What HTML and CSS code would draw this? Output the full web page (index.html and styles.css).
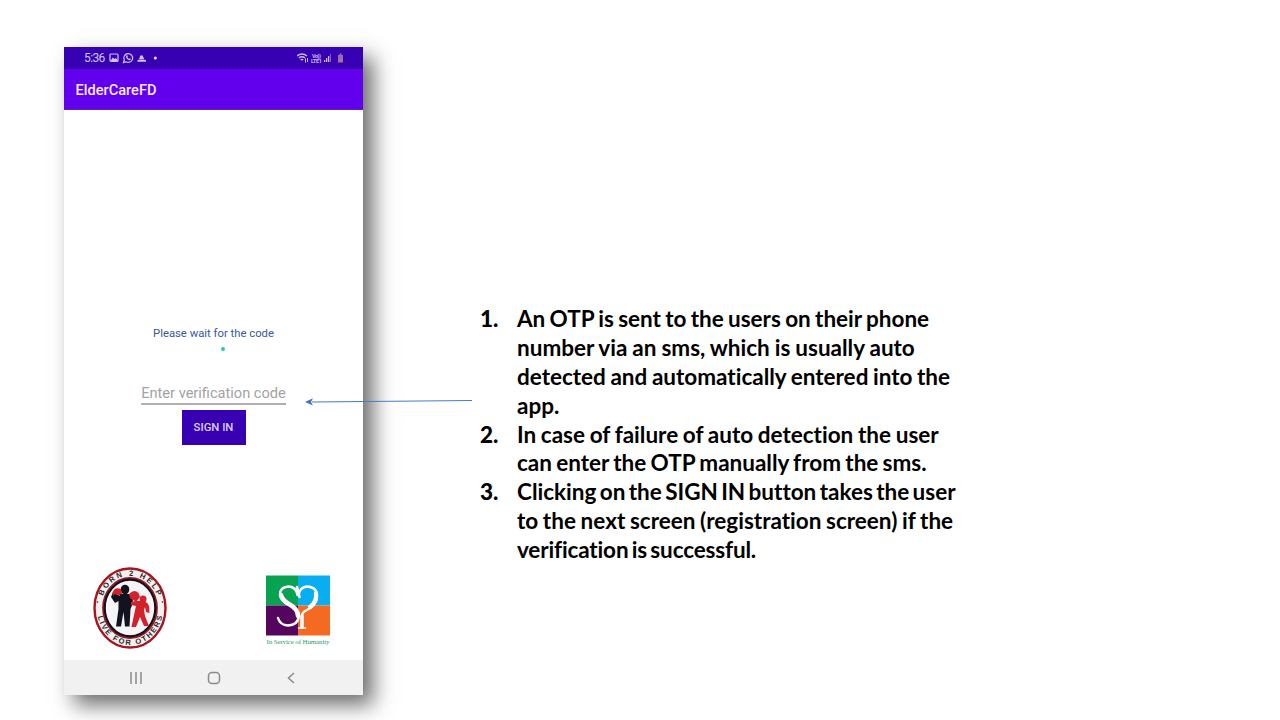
FILE: index.html
```html
<!DOCTYPE html>
<html lang="en">
<head>
<meta charset="utf-8">
<title>ElderCareFD</title>
<link rel="stylesheet" href="styles.css">
</head>
<body>
<main class="slide">
  <section class="phone">
    <div class="status">
      <span class="time">5:36</span>
      <svg class="status-left" width="52" height="12" viewBox="0 0 52 12">
        <rect x="1" y="2" width="8" height="7.4" rx="1" fill="none" stroke="#d2c3f2" stroke-width="1.2"/>
        <path d="M1.500 9L3.800 5.500L5.500 7L7 6L9 9Z" fill="#d2c3f2"/>
        <path d="M14.500 10.500L15.300 8A4.400 4.400 0 1 1 17 9.800Z" fill="none" stroke="#d2c3f2" stroke-width="1.200"/>
        <path d="M17.300 3.600q1.200-.8 1.500 1l-.4.7q.6 1.200 1.700 1.600l.7-.6q1.500.3.9 1.300q-1.800 1.500-3.900-.8q-1.400-1.900-.5-3.200" fill="#d2c3f2"/>
        <path d="M28.500 9.800h8.500v-1.700h-8.500zM29.500 7.500l1-1.500.8-2.500h2.500l.8 2.500 1 1.500z" fill="#d2c3f2"/>
        <circle cx="46.300" cy="6" r="1.500" fill="#eee7ff"/>
      </svg>
      <svg class="status-right" width="50" height="12" viewBox="0 0 50 12">
        <g fill="none" stroke="#cbb9ef" stroke-width="1.400">
          <path d="M0 4Q5 0 10 4M1.800 6Q5 3.600 8 6M3.600 8Q5 7 6.200 8"/>
          <path d="M8.500 6.500v4M10.500 6v4" stroke-width="1"/>
        </g>
        <text x="15" y="5.500" class="net" textLength="9">Vo))</text>
        <text x="14" y="10.800" class="net" textLength="11">LTE1</text>
        <path d="M27 10V8h1.300v2zM29 10V6h1.300v4zM31 10V4h1.300v6z" fill="#cbb9ef"/>
        <path d="M33 10V2h1v8z" fill="#7e5bcb"/>
        <path d="M41 3h1.500V1.500h2V3H46v4h-5z" fill="#8c6cbc"/>
        <path d="M41 7h5v3.500h-5z" fill="#b56b8f"/>
      </svg>
    </div>
    <header class="appbar">ElderCareFD</header>
    <div class="content">
      <p class="wait">Please wait for the code</p>
      <i class="dot"></i>
      <div class="field">Enter verification code</div>
      <div class="button">SIGN IN</div>
      <div class="logos">
        <svg class="logo-help" width="74" height="82" viewBox="0 0 74 82">
          <defs>
            <path id="arcTop" d="M7.800 41A29.200 32.300 0 0 1 66.200 41"/>
            <path id="arcBottom" d="M3.800 41A33.200 37 0 0 0 70.200 41"/>
          </defs>
          <ellipse cx="37" cy="41" rx="35.500" ry="39.500" fill="#f3f0f0" stroke="#a51620" stroke-width="2.400"/>
          <ellipse cx="37" cy="41" rx="27" ry="30" fill="#f5f5f7" stroke="#981923" stroke-width="1.800"/>
          <ellipse cx="37" cy="41" rx="25.300" ry="28.300" fill="none" stroke="#170d17" stroke-width="2.200"/>
          <text class="seal"><textPath href="#arcTop" startOffset="50%" text-anchor="middle" textLength="72">BORN 2 HELP</textPath></text>
          <text class="seal"><textPath href="#arcBottom" startOffset="50%" text-anchor="middle" textLength="93">LIVE FOR OTHERS</textPath></text>
          <circle cx="4.500" cy="35" r=".8" fill="#222"/>
          <circle cx="69.500" cy="35" r=".8" fill="#222"/>
          <g fill="#13131f">
            <ellipse cx="32" cy="22.500" rx="4.300" ry="4.800"/>
            <path d="M26 27L36 27Q40 30 40 36L37.500 42L36.500 59.500H32L30.500 45L28 59.500H23L25.500 42V34L22 36L18 30L20 25L27 29Z"/>
          </g>
          <path d="M19.500 26Q21 19.500 28 22L29 27L25 28L22 27L20 29Z" fill="#d4222c"/>
          <g fill="#d4222c">
            <path d="M36 27Q41 21.500 45.500 26L47 30L43 35L37 31Z"/>
            <circle cx="50" cy="32" r="3.500"/>
            <path d="M43 34L49 34Q54 34 56 39L56.500 46L53 45L52 40L51 43L52 49L56 59H51L47 50L43 60H38.500L41 48L43 39L38 38L38 35Z"/>
          </g>
        </svg>
        <svg class="logo-sp" width="68" height="76" viewBox="0 0 68 76">
          <path d="M2 2.500h32v30H2z" fill="#08a351"/>
          <path d="M34 2.500H66v30H34z" fill="#08aeef"/>
          <path d="M2 32.500h32v30H2z" fill="#56055f"/>
          <path d="M34 32.500H66v30H34z" fill="#f46a22"/>
          <g fill="none" stroke="#fff" stroke-linecap="round" stroke-linejoin="round">
            <path d="M33.500 22Q32 13.500 24 13.500Q15.500 14.500 16 22Q17 28 25 32Q35 37 35 43Q34 52 24 52.500Q16 52 14 45" stroke-width="2.400"/>
            <path d="M17 22Q18 27 25 31Q34 36 34 43" stroke-width="4.500"/>
            <path d="M35.500 24Q34 17 33 14M34.500 22Q36 14 43 13.500Q53 14 53 23Q53 32 43 37Q38 39 38 43V54" stroke-width="2.400"/>
            <path d="M52 20Q53 29 46 34" stroke-width="4.200"/>
            <path d="M38 43V54" stroke-width="3.400"/>
            <path d="M34.500 55H41.500" stroke-width="1.500"/>
          </g>
          <text class="motto" x="2.500" y="71" textLength="63">In Service of Humanity</text>
        </svg>
      </div>
    </div>
    <nav class="navbar">
      <svg width="12" height="12" viewBox="0 0 12 12"><path d="M1 0V12M6 0V12M11 0V12"/></svg>
      <svg width="14" height="14" viewBox="0 0 14 14"><rect x="1.500" y="1.500" width="11" height="11" rx="3.500"/></svg>
      <svg width="12" height="12" viewBox="0 0 12 12"><path d="M9 1L3.500 6L9 11"/></svg>
    </nav>
  </section>
  <ol class="steps">
    <li><b>1.</b><p><span class="l1">An OTP is sent to the users on their phone</span><span class="l2">number via an sms, which is usually auto</span><span class="l3">detected and automatically entered into the</span><span class="l4">app.</span></p></li>
    <li><b>2.</b><p><span class="l5">In case of failure of auto detection the user</span><span class="l6">can enter the OTP manually from the sms.</span></p></li>
    <li><b>3.</b><p><span class="l7">Clicking on the SIGN IN button takes the user</span><span class="l8">to the next screen (registration screen) if the</span><span class="l9">verification is successful.</span></p></li>
  </ol>
  <svg class="arrow" width="170" height="12" viewBox="0 0 170 12">
    <path d="M8 6L168 4.500" stroke="#4a7ac5" stroke-width="1.200"/>
    <path d="M1 6L9 2.200L7 6L9 9.500Z" fill="#4472c4"/>
  </svg>
</main>
</body>
</html>
```
FILE: styles.css
```css
* { box-sizing: border-box; }
body { margin: 0; background: #fff; overflow: hidden; }
p { margin: 0; }
.slide { position: relative; width: 1280px; height: 720px; padding: 47px 0 0 64px; display: flex; align-items: flex-start; }
.phone { width: 299px; height: 648px; display: flex; flex-direction: column; background: #fff; font-family: Roboto, sans-serif; box-shadow: 10px 10px 20px rgba(0, 0, 0, .58); }
.status { height: 22px; background: #3700b3; display: flex; align-items: center; padding: 0 16px 0 20px; color: #d2c3f2; }
.time { font-size: 12px; width: 25px; letter-spacing: -.6px; }
.status-right { margin-left: auto; }
.net { font: bold 5.5px Roboto, sans-serif; fill: #cbb9ef; }
.appbar { height: 41px; background: #6200ee; border-bottom: 1px solid #5a1fc5; color: #f5e9ff; font-size: 14.6px; font-weight: 500; line-height: 42px; padding-left: 11.5px; }
.content { height: 550px; display: flex; flex-direction: column; align-items: center; padding-top: 217px; }
.wait { font-size: 11.3px; line-height: 14px; color: #3558a5; }
.dot { width: 4px; height: 4px; border-radius: 50%; background: #27c9b5; margin: 6px 0 0 19px; }
.field { width: 145px; height: 27px; margin-top: 27px; padding-top: 6px; border-bottom: 2px solid #b0b0b0; color: #a3a3a3; font-size: 14.6px; line-height: 19px; display: flex; justify-content: center; white-space: nowrap; }
.button { width: 64px; height: 35px; margin-top: 5px; background: #3700b3; color: #dccff5; font-size: 11.3px; font-weight: 500; line-height: 35px; text-align: center; }
.logos { width: 100%; display: flex; justify-content: space-between; padding: 0 31px 0 29px; margin-top: 122px; }
.logo-sp { margin-top: 6px; }
.seal { font: bold 7.5px "Liberation Sans", sans-serif; fill: #29252a; }
.motto { font: 7px "Liberation Serif", serif; fill: #2da06a; }
.navbar { height: 35px; background: #f1f1f1; display: flex; align-items: center; padding: 0 66px; justify-content: space-between; }
.navbar svg { fill: none; stroke: #8b8b8b; stroke-width: 1.5; }
.steps { list-style: none; margin: 258px 0 0 117px; padding: 0; font: bold 22.5px/28.87px Lato, sans-serif; color: #000; font-variant-ligatures: none; }
.steps li { display: flex; }
.steps b { width: 37px; }
.steps span { display: block; white-space: nowrap; width: max-content; }
.l1 { word-spacing: -1.2px; }
.l2 { word-spacing: -.5px; }
.l3 { word-spacing: -.9px; }
.l5 { word-spacing: -.8px; }
.l6 { word-spacing: -1.2px; }
.l7 { word-spacing: -2.1px; }
.l8 { word-spacing: -.8px; }
.l9 { word-spacing: -2px; letter-spacing: -.15px; }
.arrow { position: absolute; left: 304px; top: 396px; }
```
